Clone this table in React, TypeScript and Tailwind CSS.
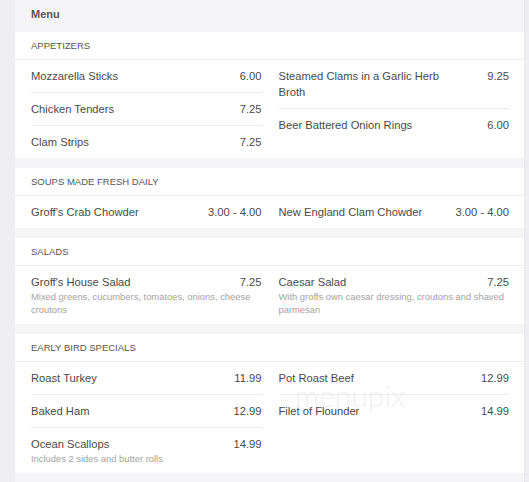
type Item = { name: string; price: string; desc?: string };
type Section = { title: string; left: Item[]; right: Item[] };

const sections: Section[] = [
  {
    title: "Appetizers",
    left: [
      { name: "Mozzarella Sticks", price: "6.00" },
      { name: "Chicken Tenders", price: "7.25" },
      { name: "Clam Strips", price: "7.25" },
    ],
    right: [
      { name: "Steamed Clams in a Garlic Herb Broth", price: "9.25" },
      { name: "Beer Battered Onion Rings", price: "6.00" },
    ],
  },
  {
    title: "Soups Made Fresh Daily",
    left: [{ name: "Groff's Crab Chowder", price: "3.00 - 4.00" }],
    right: [{ name: "New England Clam Chowder", price: "3.00 - 4.00" }],
  },
  {
    title: "Salads",
    left: [
      {
        name: "Groff's House Salad",
        price: "7.25",
        desc: "Mixed greens, cucumbers, tomatoes, onions, cheese croutons",
      },
    ],
    right: [
      {
        name: "Caesar Salad",
        price: "7.25",
        desc: "With groffs own caesar dressing, croutons and shaved parmesan",
      },
    ],
  },
  {
    title: "Early Bird Specials",
    left: [
      { name: "Roast Turkey", price: "11.99" },
      { name: "Baked Ham", price: "12.99" },
      {
        name: "Ocean Scallops",
        price: "14.99",
        desc: "Includes 2 sides and butter rolls",
      },
    ],
    right: [
      { name: "Pot Roast Beef", price: "12.99" },
      { name: "Filet of Flounder", price: "14.99" },
    ],
  },
];

function Column({ items }: { items: Item[] }) {
  return (
    <div className="flex flex-col">
      {items.map((item, i) => (
        <div
          key={item.name}
          className={
            i < items.length - 1
              ? "py-2 border-b border-[#ececf0]"
              : "py-2"
          }
        >
          <div className="flex justify-between gap-3 text-[11.2px] leading-4 text-[#4a4a4a]">
            <span className="max-w-[165px]">{item.name}</span>
            <span className="shrink-0">{item.price}</span>
          </div>
          {item.desc && (
            <p className="text-[9.4px] leading-[13px] text-[#a3a3a3]">{item.desc}</p>
          )}
        </div>
      ))}
    </div>
  );
}

export default function App() {
  return (
    <div
      className="w-[529px] h-[482px] overflow-hidden bg-[#efeff3] pl-[15px] pr-[4px]"
      style={{ fontFamily: '"Liberation Sans", Arial, sans-serif' }}
    >
      <div className="relative h-full bg-[#f5f5f8] border-r border-[#e8e8ec]">
        {/* Title */}
        <div className="h-8 px-4 pt-[8px] text-[11px] leading-[13px] font-bold text-[#555]">
          Menu
        </div>

        {/* Sections */}
        <div className="flex flex-col gap-[10px]">
          {sections.map((s) => (
            <div key={s.title} className="bg-white">
              <div className="px-4 py-[7px] border-b border-[#ececf0] text-[9.5px] leading-[13px] uppercase text-[#555]">
                {s.title}
              </div>
              <div className="grid grid-cols-2 gap-x-[17px] pl-4 pr-[15px]">
                <Column items={s.left} />
                <Column items={s.right} />
              </div>
            </div>
          ))}
        </div>

        {/* watermark */}
        <div
          className="absolute left-[280px] top-[380px] text-[30px] leading-none font-light text-[#e2e2e6] opacity-50 pointer-events-none select-none"
          style={{ fontFamily: "Lato, sans-serif" }}
        >
          menupix
        </div>
      </div>
    </div>
  );
}
